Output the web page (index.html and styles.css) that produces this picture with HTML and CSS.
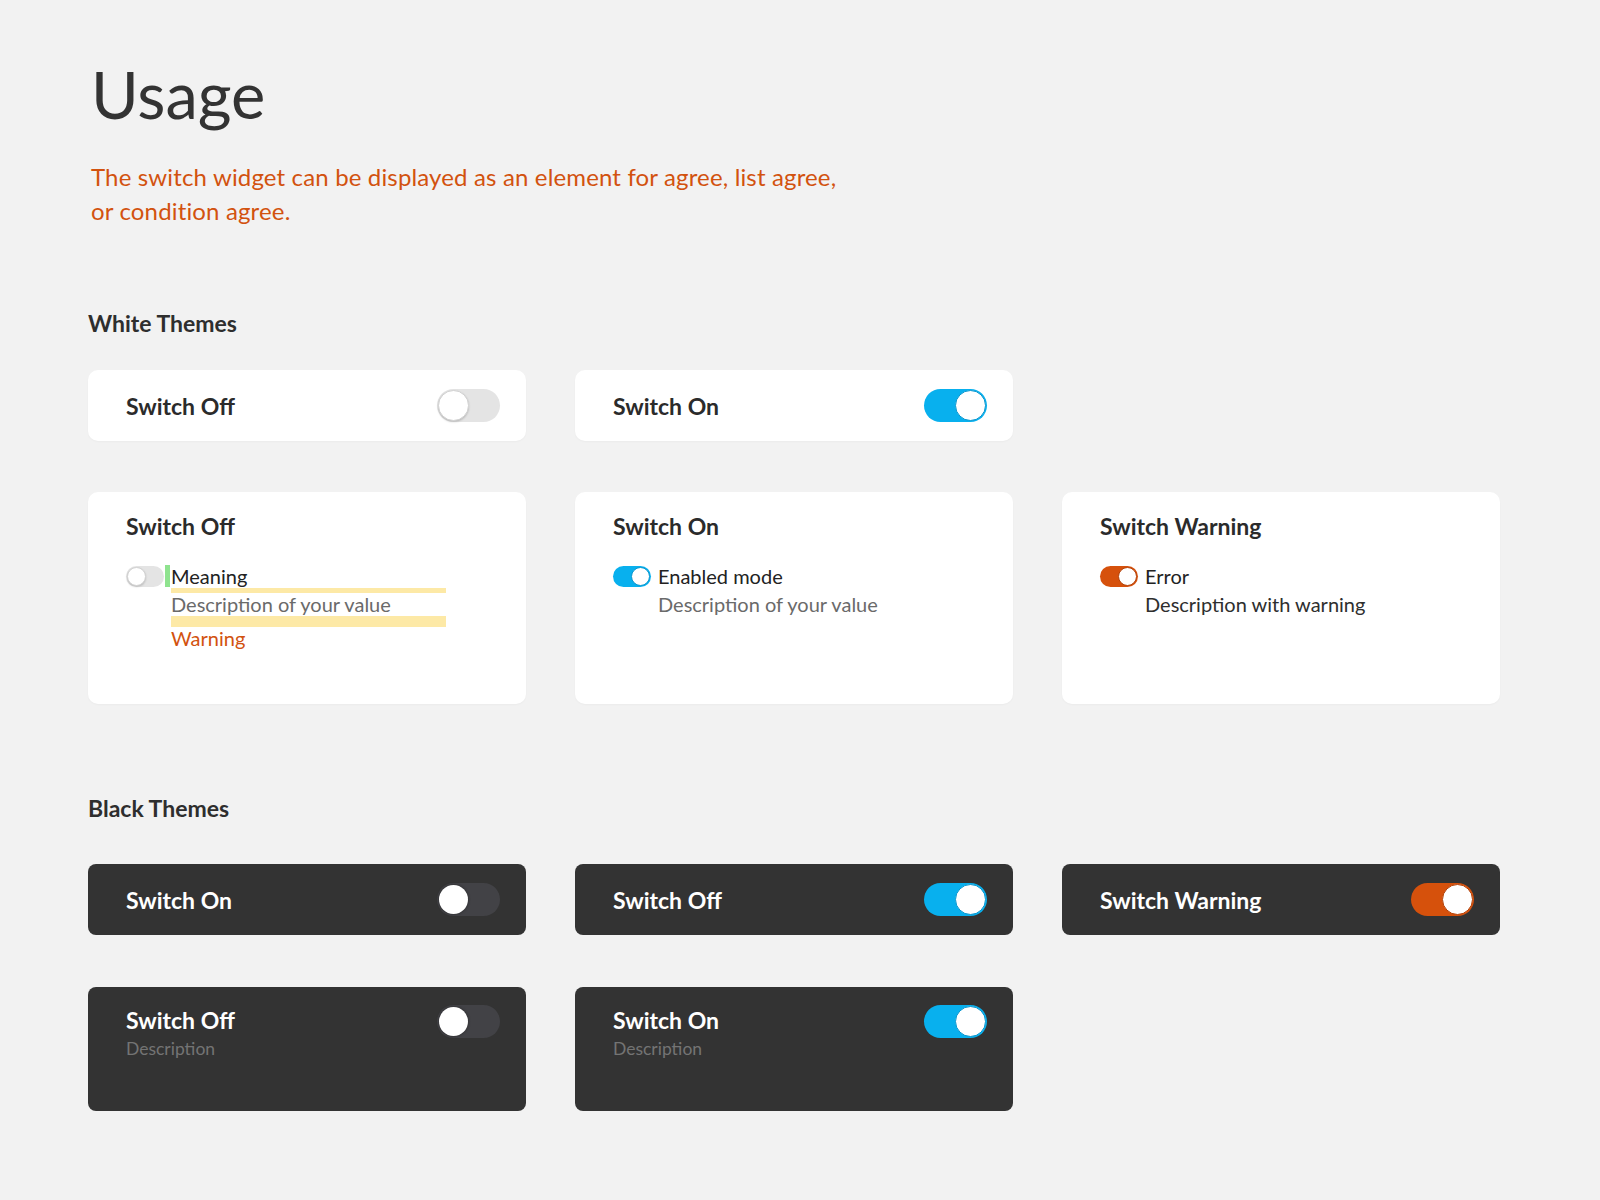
FILE: index.html
```html
<!DOCTYPE html>
<html lang="en">
<head>
<meta charset="utf-8">
<title>Usage</title>
<link rel="stylesheet" href="styles.css">
</head>
<body>
<main class="page">
  <section class="intro">
    <h1 class="title">Usage</h1>
    <p class="lead">The switch widget can be displayed as an element for agree, list agree, or condition agree.</p>
  </section>

  <h2 class="section-title section-white">White Themes</h2>

  <div class="row">
    <div class="card card-bar">
      <span class="card-title">Switch Off</span>
      <span class="toggle toggle-lg is-off"><span class="knob"></span></span>
    </div>
    <div class="card card-bar">
      <span class="card-title">Switch On</span>
      <span class="toggle toggle-lg is-on"><span class="knob"></span></span>
    </div>
  </div>

  <div class="row row-tall">
    <div class="card card-tall">
      <div class="card-title">Switch Off</div>
      <div class="item">
        <span class="toggle toggle-sm is-off"><span class="knob"></span></span>
        <span class="gap gap-marked"><span class="gap-mark"></span></span>
        <div class="item-text">
          <div class="item-label">Meaning</div>
          <div class="spacer spacer-s spacer-marked"></div>
          <div class="item-desc">Description of your value</div>
          <div class="spacer spacer-l spacer-marked"></div>
          <div class="item-warn">Warning</div>
        </div>
      </div>
    </div>
    <div class="card card-tall">
      <div class="card-title">Switch On</div>
      <div class="item">
        <span class="toggle toggle-sm is-on"><span class="knob"></span></span>
        <span class="gap"></span>
        <div class="item-text">
          <div class="item-label">Enabled mode</div>
          <div class="spacer spacer-s"></div>
          <div class="item-desc">Description of your value</div>
        </div>
      </div>
    </div>
    <div class="card card-tall">
      <div class="card-title">Switch Warning</div>
      <div class="item">
        <span class="toggle toggle-sm is-warn"><span class="knob"></span></span>
        <span class="gap"></span>
        <div class="item-text">
          <div class="item-label">Error</div>
          <div class="spacer spacer-s"></div>
          <div class="item-desc item-desc-dark">Description with warning</div>
        </div>
      </div>
    </div>
  </div>

  <h2 class="section-title section-black">Black Themes</h2>

  <div class="row">
    <div class="card card-dark card-bar">
      <span class="card-title">Switch On</span>
      <span class="toggle toggle-lg is-dark-off"><span class="knob"></span></span>
    </div>
    <div class="card card-dark card-bar">
      <span class="card-title">Switch Off</span>
      <span class="toggle toggle-lg is-dark-on"><span class="knob"></span></span>
    </div>
    <div class="card card-dark card-bar">
      <span class="card-title">Switch Warning</span>
      <span class="toggle toggle-lg is-dark-warn"><span class="knob"></span></span>
    </div>
  </div>

  <div class="row">
    <div class="card card-dark card-desc">
      <div class="card-head">
        <span class="card-title">Switch Off</span>
        <span class="toggle toggle-lg is-dark-off"><span class="knob"></span></span>
      </div>
      <div class="card-sub">Description</div>
    </div>
    <div class="card card-dark card-desc">
      <div class="card-head">
        <span class="card-title">Switch On</span>
        <span class="toggle toggle-lg is-dark-on"><span class="knob"></span></span>
      </div>
      <div class="card-sub">Description</div>
    </div>
  </div>
</main>
</body>
</html>
```

FILE: styles.css
```css
* { box-sizing: border-box; }

html, body {
  margin: 0;
  padding: 0;
  background: #f2f2f2;
}

body {
  font-family: "Lato", "Open Sans", "Liberation Sans", sans-serif;
  color: #333333;
}

.page {
  padding: 57px 88px 60px 88px;
}

.intro {
  padding-left: 3px;
}

.title {
  margin: 0;
  font-size: 65px;
  line-height: 74px;
  font-weight: 400;
  color: #333333;
}

.lead {
  margin: 29px 0 0 0;
  max-width: 760px;
  font-size: 24px;
  line-height: 34px;
  letter-spacing: 0.15px;
  color: #d2520f;
}

.section-title {
  margin: 0;
  font-size: 23px;
  line-height: 26px;
  font-weight: 700;
  color: #2e2e2e;
}

.section-white { margin-top: 82px; margin-bottom: 34px; }
.section-black { margin-top: 91px; margin-bottom: 43px; }

.row {
  display: grid;
  grid-template-columns: repeat(3, 438px);
  column-gap: 49px;
}

.row + .row { margin-top: 52px; }
.row + .row-tall { margin-top: 51px; }

.card {
  background: #ffffff;
  border-radius: 10px;
  box-shadow: 0 1px 2px rgba(0, 0, 0, 0.03);
}

.card-dark {
  background: #333333;
  border-radius: 8px;
  box-shadow: none;
}

.card-title {
  font-size: 23px;
  line-height: 26px;
  font-weight: 700;
  color: #2b2b2b;
}

.card-dark .card-title { color: #ffffff; }

.card-bar {
  display: flex;
  align-items: center;
  justify-content: space-between;
  padding: 19px 26px 19px 38px;
}

.card-tall {
  padding: 21px 38px 54px 38px;
}

.item {
  display: flex;
  align-items: flex-start;
  margin-top: 26px;
}

.gap {
  width: 7px;
  flex: none;
  height: 22px;
}

.gap-mark {
  display: block;
  width: 5px;
  height: 22px;
  margin-left: 1px;
  background: #8fe38f;
}

.item-text {
  display: flex;
  flex-direction: column;
}

.item-label {
  font-size: 20px;
  line-height: 23px;
  color: #222222;
}

.item-desc {
  font-size: 20px;
  line-height: 23px;
  color: #6a6a6a;
}

.item-desc-dark { color: #2e2e2e; }

.item-warn {
  font-size: 20px;
  line-height: 23px;
  color: #d2520f;
}

.spacer { width: 275px; }
.spacer-s { height: 5px; }
.spacer-l { height: 11px; }
.spacer-marked { background: #fde9a6; }

.card-desc {
  padding: 18px 26px 52px 38px;
}

.card-head {
  display: flex;
  align-items: flex-start;
  justify-content: space-between;
}

.card-head .card-title { padding-top: 2px; }

.card-sub {
  margin-top: 0;
  font-size: 17.5px;
  line-height: 21px;
  color: #747474;
}

/* toggles */
.toggle {
  display: flex;
  align-items: center;
  flex: none;
  padding: 1px;
}

.knob {
  display: block;
  border-radius: 50%;
  background: #ffffff;
}

.toggle-lg {
  width: 63px;
  height: 33px;
  border-radius: 17px;
}

.toggle-lg .knob { width: 31px; height: 31px; }

.toggle-sm {
  width: 38px;
  height: 21px;
  border-radius: 11px;
  margin-top: 1px;
}

.toggle-sm .knob { width: 19px; height: 19px; }

.is-off { background: #e4e4e4; justify-content: flex-start; }
.is-off .knob {
  border: 1px solid #d2d2d2;
  box-shadow: 0 1px 2px rgba(0, 0, 0, 0.18);
}

.is-on { background: #08b0ee; justify-content: flex-end; }
.is-on .knob { border: 1.5px solid #0a97cf; }

.is-warn { background: #d6510c; justify-content: flex-end; }
.is-warn .knob { border: 1.5px solid #b4430a; }

.is-dark-off {
  background: #424246;
  justify-content: flex-start;
  padding: 2px;
}
.is-dark-off .knob {
  width: 29px;
  height: 29px;
  box-shadow: 0 0 3px rgba(0, 0, 0, 0.45);
}

.is-dark-on { background: #08b0ee; justify-content: flex-end; }
.is-dark-on .knob { border: 1.5px solid #0a97cf; }

.is-dark-warn { background: #d6510c; justify-content: flex-end; }
.is-dark-warn .knob { border: 1.5px solid #b4430a; }
```
